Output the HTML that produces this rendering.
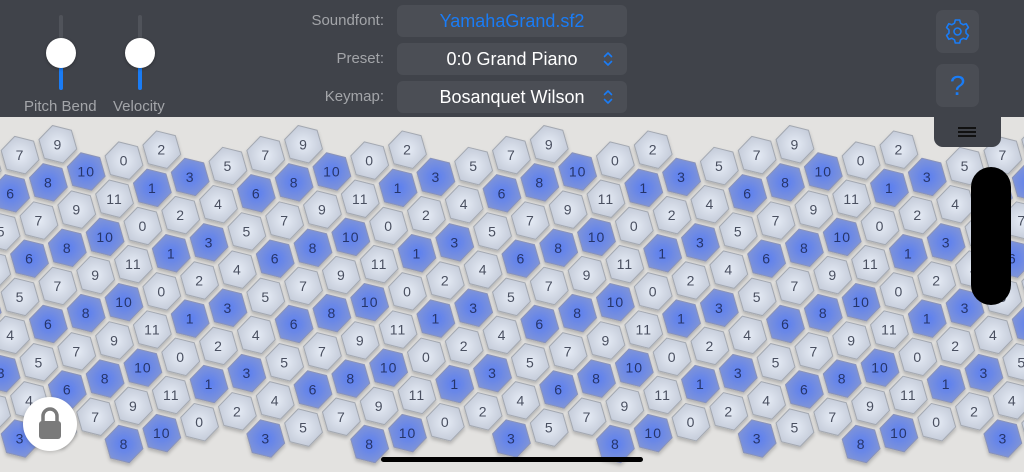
<!DOCTYPE html>
<html><head><meta charset="utf-8"><style>
body{margin:0;width:1024px;height:472px;overflow:hidden;background:#e3e2e0;font-family:"Liberation Sans",sans-serif;position:relative}
#hdr{position:absolute;left:0;top:0;width:1024px;height:117px;background:#40434a}
.lbl{position:absolute;color:#a3a5a9;font-size:15px;text-align:right;width:120px;left:264px}
.box{position:absolute;left:397px;width:230px;height:32px;background:#4b4e55;border-radius:6px;color:#fff;font-size:18px;text-align:center;line-height:32px}
.chev{position:absolute;right:14px;top:8px}
.trk{position:absolute;width:4px;border-radius:2px}
.thumb{position:absolute;width:30px;height:30px;border-radius:50%;background:#fff;box-shadow:0 1px 3px rgba(0,0,0,.3)}
.sl{position:absolute;color:#a3a5a9;font-size:15px;top:98px}
.btn{position:absolute;left:936px;width:43px;height:43px;background:#4a4d54;border-radius:7px}
svg text{font-family:"Liberation Sans",sans-serif;font-size:14px;text-anchor:middle;letter-spacing:1px}
</style></head><body>
<svg width="1024" height="472" style="position:absolute;left:0;top:0">
<defs>
<radialGradient id="gl" cx="50%" cy="50%" r="55%"><stop offset="0" stop-color="#e6ecf6"/><stop offset="1" stop-color="#c2c9d7"/></radialGradient>
<radialGradient id="gb" cx="50%" cy="50%" r="55%"><stop offset="0" stop-color="#5a7ef2"/><stop offset="1" stop-color="#8296d6"/></radialGradient>
<polygon id="L" points="-5.37,-18.75 13.55,-14.03 18.92,4.72 5.37,18.75 -13.55,14.03 -18.92,-4.72" fill="url(#gl)" stroke="#a3a8b1" stroke-width="1" stroke-linejoin="round"/>
<polygon id="B" points="-5.37,-18.75 13.55,-14.03 18.92,4.72 5.37,18.75 -13.55,14.03 -18.92,-4.72" fill="url(#gb)" stroke="#8a93b8" stroke-width="1" stroke-linejoin="round"/>
<filter id="sh" x="-10%" y="-10%" width="120%" height="120%"><feDropShadow dx="0" dy="2.5" stdDeviation="1.8" flood-color="#000" flood-opacity="0.22"/></filter>
<g id="strip">
<g transform="translate(-17.75,166.05)"><use href="#L"/><text y="5" fill="#4a5060">5</text></g>
<g transform="translate(20.05,155.15)"><use href="#L"/><text y="5" fill="#4a5060">7</text></g>
<g transform="translate(57.85,144.25)"><use href="#L"/><text y="5" fill="#4a5060">9</text></g>
<g transform="translate(10.6,193.3)"><use href="#B"/><text y="5" fill="#28366a">6</text></g>
<g transform="translate(48.4,182.4)"><use href="#B"/><text y="5" fill="#28366a">8</text></g>
<g transform="translate(86.2,171.5)"><use href="#B"/><text y="5" fill="#28366a">10</text></g>
<g transform="translate(124,160.6)"><use href="#L"/><text y="5" fill="#4a5060">0</text></g>
<g transform="translate(161.8,149.7)"><use href="#L"/><text y="5" fill="#4a5060">2</text></g>
<g transform="translate(1.15,231.45)"><use href="#L"/><text y="5" fill="#4a5060">5</text></g>
<g transform="translate(38.95,220.55)"><use href="#L"/><text y="5" fill="#4a5060">7</text></g>
<g transform="translate(76.75,209.65)"><use href="#L"/><text y="5" fill="#4a5060">9</text></g>
<g transform="translate(114.55,198.75)"><use href="#L"/><text y="5" fill="#4a5060">11</text></g>
<g transform="translate(152.35,187.85)"><use href="#B"/><text y="5" fill="#28366a">1</text></g>
<g transform="translate(190.15,176.95)"><use href="#B"/><text y="5" fill="#28366a">3</text></g>
<g transform="translate(-8.3,269.6)"><use href="#L"/><text y="5" fill="#4a5060">4</text></g>
<g transform="translate(29.5,258.7)"><use href="#B"/><text y="5" fill="#28366a">6</text></g>
<g transform="translate(67.3,247.8)"><use href="#B"/><text y="5" fill="#28366a">8</text></g>
<g transform="translate(105.1,236.9)"><use href="#B"/><text y="5" fill="#28366a">10</text></g>
<g transform="translate(142.9,226)"><use href="#L"/><text y="5" fill="#4a5060">0</text></g>
<g transform="translate(180.7,215.1)"><use href="#L"/><text y="5" fill="#4a5060">2</text></g>
<g transform="translate(218.5,204.2)"><use href="#L"/><text y="5" fill="#4a5060">4</text></g>
<g transform="translate(-17.75,307.75)"><use href="#B"/><text y="5" fill="#28366a">3</text></g>
<g transform="translate(20.05,296.85)"><use href="#L"/><text y="5" fill="#4a5060">5</text></g>
<g transform="translate(57.85,285.95)"><use href="#L"/><text y="5" fill="#4a5060">7</text></g>
<g transform="translate(95.65,275.05)"><use href="#L"/><text y="5" fill="#4a5060">9</text></g>
<g transform="translate(133.45,264.15)"><use href="#L"/><text y="5" fill="#4a5060">11</text></g>
<g transform="translate(171.25,253.25)"><use href="#B"/><text y="5" fill="#28366a">1</text></g>
<g transform="translate(209.05,242.35)"><use href="#B"/><text y="5" fill="#28366a">3</text></g>
<g transform="translate(10.6,334.9)"><use href="#L"/><text y="5" fill="#4a5060">4</text></g>
<g transform="translate(48.4,324)"><use href="#B"/><text y="5" fill="#28366a">6</text></g>
<g transform="translate(86.2,313.1)"><use href="#B"/><text y="5" fill="#28366a">8</text></g>
<g transform="translate(124,302.2)"><use href="#B"/><text y="5" fill="#28366a">10</text></g>
<g transform="translate(161.8,291.4)"><use href="#L"/><text y="5" fill="#4a5060">0</text></g>
<g transform="translate(199.6,280.5)"><use href="#L"/><text y="5" fill="#4a5060">2</text></g>
<g transform="translate(1.15,373.15)"><use href="#B"/><text y="5" fill="#28366a">3</text></g>
<g transform="translate(38.95,362.25)"><use href="#L"/><text y="5" fill="#4a5060">5</text></g>
<g transform="translate(76.75,351.35)"><use href="#L"/><text y="5" fill="#4a5060">7</text></g>
<g transform="translate(114.55,340.45)"><use href="#L"/><text y="5" fill="#4a5060">9</text></g>
<g transform="translate(152.35,329.55)"><use href="#L"/><text y="5" fill="#4a5060">11</text></g>
<g transform="translate(190.15,318.65)"><use href="#B"/><text y="5" fill="#28366a">1</text></g>
<g transform="translate(-8.3,411.3)"><use href="#L"/><text y="5" fill="#4a5060">2</text></g>
<g transform="translate(29.5,400.4)"><use href="#L"/><text y="5" fill="#4a5060">4</text></g>
<g transform="translate(67.3,389.5)"><use href="#B"/><text y="5" fill="#28366a">6</text></g>
<g transform="translate(105.1,378.6)"><use href="#B"/><text y="5" fill="#28366a">8</text></g>
<g transform="translate(142.9,367.7)"><use href="#B"/><text y="5" fill="#28366a">10</text></g>
<g transform="translate(180.7,356.8)"><use href="#L"/><text y="5" fill="#4a5060">0</text></g>
<g transform="translate(218.5,345.9)"><use href="#L"/><text y="5" fill="#4a5060">2</text></g>
<g transform="translate(20.05,438.55)"><use href="#B"/><text y="5" fill="#28366a">3</text></g>
<g transform="translate(57.85,427.65)"><use href="#L"/><text y="5" fill="#4a5060">5</text></g>
<g transform="translate(95.65,416.75)"><use href="#L"/><text y="5" fill="#4a5060">7</text></g>
<g transform="translate(133.45,405.85)"><use href="#L"/><text y="5" fill="#4a5060">9</text></g>
<g transform="translate(171.25,394.95)"><use href="#L"/><text y="5" fill="#4a5060">11</text></g>
<g transform="translate(209.05,384.05)"><use href="#B"/><text y="5" fill="#28366a">1</text></g>
<g transform="translate(124,444)"><use href="#B"/><text y="5" fill="#28366a">8</text></g>
<g transform="translate(161.8,433.1)"><use href="#B"/><text y="5" fill="#28366a">10</text></g>
<g transform="translate(199.6,422.2)"><use href="#L"/><text y="5" fill="#4a5060">0</text></g>
</g>
</defs>
<g filter="url(#sh)">
<use href="#strip"/>
<use href="#strip" x="245.7"/>
<use href="#strip" x="491.4"/>
<use href="#strip" x="737.1"/>
<use href="#strip" x="982.8"/>
</g>
</svg>

<div id="hdr">
  <div class="trk" style="left:59px;top:15px;height:75px;background:#50535a"></div>
  <div class="trk" style="left:59px;top:60px;height:30px;background:#1a7cf5"></div>
  <div class="thumb" style="left:46px;top:38px"></div>
  <div class="sl" style="left:24px">Pitch Bend</div>
  <div class="trk" style="left:138px;top:15px;height:75px;background:#50535a"></div>
  <div class="trk" style="left:138px;top:60px;height:30px;background:#1a7cf5"></div>
  <div class="thumb" style="left:125px;top:38px"></div>
  <div class="sl" style="left:113px">Velocity</div>

  <div class="lbl" style="top:12px">Soundfont:</div>
  <div class="lbl" style="top:50px">Preset:</div>
  <div class="lbl" style="top:88px">Keymap:</div>
  <div class="box" style="top:5px;color:#1a7cf5">YamahaGrand.sf2</div>
  <div class="box" style="top:43px">0:0 Grand Piano<svg class="chev" width="10" height="16" viewBox="0 0 10 16"><path d="M1.5 5.5 L5 2 L8.5 5.5 M1.5 10.5 L5 14 L8.5 10.5" fill="none" stroke="#1a7cf5" stroke-width="1.6" stroke-linecap="round" stroke-linejoin="round"/></svg></div>
  <div class="box" style="top:81px">Bosanquet Wilson<svg class="chev" width="10" height="16" viewBox="0 0 10 16"><path d="M1.5 5.5 L5 2 L8.5 5.5 M1.5 10.5 L5 14 L8.5 10.5" fill="none" stroke="#1a7cf5" stroke-width="1.6" stroke-linecap="round" stroke-linejoin="round"/></svg></div>

  <div class="btn" style="top:10px"><svg width="43" height="43" viewBox="0 0 43 43"><g transform="translate(21.5,21.5)" fill="none" stroke="#1a7cf5" stroke-width="1.6" stroke-linejoin="round"><path d="M-2.2,-11.5 L2.2,-11.5 L3,-8.3 L5.6,-6.8 L8.7,-7.8 L10.9,-4 L8.5,-1.6 L8.5,1.6 L10.9,4 L8.7,7.8 L5.6,6.8 L3,8.3 L2.2,11.5 L-2.2,11.5 L-3,8.3 L-5.6,6.8 L-8.7,7.8 L-10.9,4 L-8.5,1.6 L-8.5,-1.6 L-10.9,-4 L-8.7,-7.8 L-5.6,-6.8 L-3,-8.3 Z"/><circle r="3.5"/></g></svg></div>
  <div class="btn" style="top:64px"><div style="color:#1a7cf5;font-size:28px;text-align:center;line-height:43px">?</div></div>
</div>
<div style="position:absolute;left:934px;top:112px;width:67px;height:35px;background:#40434a;border-radius:0 0 9px 9px"></div>
<div style="position:absolute;left:958px;top:127px;width:18px;height:1.5px;background:#111"></div>
<div style="position:absolute;left:958px;top:131px;width:18px;height:1.5px;background:#111"></div>
<div style="position:absolute;left:958px;top:135px;width:18px;height:1.5px;background:#111"></div>

<div style="position:absolute;left:971px;top:167px;width:40px;height:138px;background:#000;border-radius:20px"></div>

<div style="position:absolute;left:23px;top:397px;width:54px;height:54px;border-radius:50%;background:#fff;box-shadow:0 1px 4px rgba(0,0,0,.2)"></div>
<svg style="position:absolute;left:36px;top:405px" width="28" height="36" viewBox="0 0 28 36"><path d="M7 17 V11 A7 7 0 0 1 21 11 V17" fill="none" stroke="#7a7a7a" stroke-width="3.5"/><rect x="3" y="16" width="22" height="18" rx="3" fill="#7a7a7a"/></svg>

<div style="position:absolute;left:381px;top:457px;width:262px;height:5px;background:#000;border-radius:3px"></div>
</body></html>
